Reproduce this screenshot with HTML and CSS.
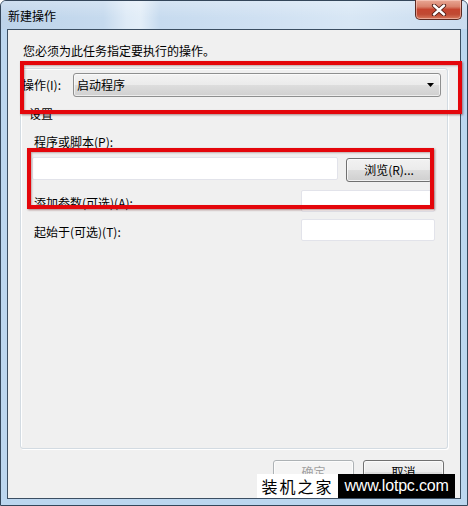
FILE: index.html
```html
<!DOCTYPE html>
<html lang="zh-CN">
<head>
<meta charset="utf-8">
<title>新建操作</title>
<link rel="stylesheet" href="styles.css">
</head>
<body>
<div class="window">
  <div class="titlebar">
    <span class="title">新建操作</span>
    <button class="close" aria-label="关闭">
      <svg width="16" height="12" viewBox="0 0 16 12">
        <path d="M3 1.5 L13 10.5 M13 1.5 L3 10.5" stroke="#4a1b14" stroke-width="4.2" stroke-linecap="round" fill="none"/>
        <path d="M3 1.5 L13 10.5 M13 1.5 L3 10.5" stroke="#ffffff" stroke-width="2.4" stroke-linecap="round" fill="none"/>
      </svg>
    </button>
  </div>
  <div class="client">
    <p class="intro">您必须为此任务指定要执行的操作。</p>
    <div class="group">
      <div class="action-row">
        <span class="action-label">操作(I):</span>
        <div class="combo">
          <span>启动程序</span>
          <svg class="arrow" width="7" height="4" viewBox="0 0 7 4"><path d="M0 0 H7 L3.5 4 Z" fill="#000"/></svg>
        </div>
      </div>
      <div class="legend">设置</div>
      <div class="field-label">程序或脚本(P):</div>
      <div class="prog-row">
        <div class="input wide"></div>
        <button class="btn browse">浏览(R)...</button>
      </div>
      <div class="opt-row first">
        <span>添加参数(可选)(A):</span>
        <div class="input small"></div>
      </div>
      <div class="opt-row">
        <span>起始于(可选)(T):</span>
        <div class="input small"></div>
      </div>
    </div>
    <div class="footer">
      <button class="btn dlg disabled">确定</button>
      <button class="btn dlg">取消</button>
    </div>
  </div>
  <div class="mark mark-1"></div>
  <div class="mark mark-2"></div>
  <div class="watermark">
    <span class="wm-cn">装机之家</span>
    <span class="wm-en">www.lotpc.com</span>
  </div>
</div>
</body>
</html>
```
FILE: styles.css
```css
* { box-sizing: border-box; }
html, body { margin: 0; padding: 0; background: #fff; }
body { width: 468px; height: 506px; overflow: hidden; font-family: "Noto Sans CJK SC", "Liberation Sans", sans-serif; font-size: 12px; color: #000; }

.window {
  position: relative;
  width: 468px;
  height: 506px;
  border: 1px solid #34465a;
  border-radius: 6px 6px 0 0;
  background: #bcd6ef;
  display: flex;
  flex-direction: column;
}

.titlebar {
  height: 28px;
  display: flex;
  align-items: flex-start;
  border-radius: 5px 5px 0 0;
  background:
    linear-gradient(to bottom, rgba(255,255,255,0.25), rgba(255,255,255,0) 60%),
    linear-gradient(to right, #bdd3ea 0, #c6daee 22%, #dfebf7 27%, #e3eef8 30%, #c7dbef 34%, #cfe0f2 55%, #d8e7f5 75%, #cadcef 100%);
}
.title {
  margin: 8px 0 0 7px;
  line-height: 14px;
  font-size: 12px;
  color: #000;
}
.close {
  margin: -1px 5px 0 auto;
  width: 47px;
  height: 20px;
  padding: 0;
  border: 1px solid #5b2a22;
  border-top: none;
  border-radius: 0 0 5px 5px;
  background: linear-gradient(to bottom, #e9a895 0, #d9826c 35%, #c5452f 50%, #c04a33 75%, #d77a5f 100%);
  box-shadow: inset 0 0 0 1px rgba(255,220,210,0.5);
  display: flex;
  align-items: center;
  justify-content: center;
}

.client {
  margin: 0 6px 6px 6px;
  height: 470px;
  border: 1px solid #3b4e62;
  background: #f0f0f0;
  padding: 13px 0 0 12px;
  display: flex;
  flex-direction: column;
}

.intro {
  margin: 0 0 0 3px;
  line-height: 16px;
  height: 16px;
}

.group {
  margin-top: 9px;
  width: 428px;
  height: 381px;
  border: 1px solid #d3dbe2;
  border-radius: 3px;
  box-shadow: inset 1px 1px 0 #fff, 1px 1px 0 #fff;
  display: flex;
  flex-direction: column;
}

.action-row {
  margin: 4px 0 0 1px;
  height: 24px;
  display: flex;
  align-items: center;
}
.action-label { width: 51px; line-height: 16px; }
.combo {
  width: 368px;
  height: 24px;
  border: 1px solid #8e8f8f;
  border-radius: 3px;
  background: linear-gradient(to bottom, #f3f3f3 0, #ebebeb 50%, #dddddd 51%, #d0d0d0 100%);
  box-shadow: inset 0 0 0 1px rgba(255,255,255,0.6);
  display: flex;
  align-items: center;
  padding: 0 6px 0 3px;
}
.combo span { flex: 1; line-height: 16px; }
.arrow { display: block; }

.legend {
  margin: 9px 0 0 8px;
  line-height: 16px;
}
.field-label {
  margin: 12px 0 0 13px;
  line-height: 16px;
}
.prog-row {
  margin: 7px 0 0 11px;
  display: flex;
  align-items: flex-start;
}
.input {
  background: #fff;
  border: 1px solid #e2e3ea;
  border-radius: 2px;
}
.input.wide { width: 306px; height: 23px; }
.input.small { width: 134px; height: 22px; }

.btn {
  font-family: "Noto Sans CJK SC", "Liberation Sans", sans-serif;
  font-size: 12px;
  color: #000;
  border: 1px solid #707070;
  border-radius: 3px;
  background: linear-gradient(to bottom, #f2f2f2 0, #ebebeb 50%, #dddddd 51%, #cfcfcf 100%);
  box-shadow: inset 0 0 0 1px rgba(255,255,255,0.7);
  padding: 0;
  line-height: 16px;
}
.browse {
  margin: 1px 0 0 8px;
  width: 86px;
  height: 24px;
}

.opt-row {
  margin: 7px 12px 0 13px;
  display: flex;
  align-items: center;
  justify-content: space-between;
  line-height: 16px;
}
.opt-row.first { margin-top: 8px; }
.opt-row span { padding-top: 3px; }

.footer {
  margin-top: 11px;
  padding-right: 16px;
  display: flex;
  justify-content: flex-end;
  gap: 9px;
}
.dlg { width: 81px; height: 23px; }
.dlg.disabled {
  color: #a0a0a0;
  border-color: #adb2b5;
  background: #f4f4f4;
}

.mark {
  position: absolute;
  border: 4px solid #e4060b;
  box-shadow: 1px 1px 2px rgba(80,0,0,0.45), inset 1px 1px 2px rgba(80,0,0,0.3);
  pointer-events: none;
}
.mark-1 { left: 19px; top: 60px; width: 442px; height: 53px; }
.mark-2 { left: 26px; top: 147px; width: 407px; height: 61px; }

.watermark {
  position: absolute;
  left: 256px;
  top: 473px;
  display: flex;
  height: 24px;
}
.wm-cn {
  width: 81px;
  background: #fff;
  color: #000;
  font-family: "Noto Sans CJK SC", sans-serif;
  font-size: 16px;
  letter-spacing: 2px;
  line-height: 24px;
  text-align: center;
}
.wm-en {
  width: 117px;
  background: #000;
  color: #fff;
  font-family: "Liberation Sans", sans-serif;
  font-size: 16px;
  line-height: 24px;
  text-align: center;
  letter-spacing: -0.2px;
}
```
